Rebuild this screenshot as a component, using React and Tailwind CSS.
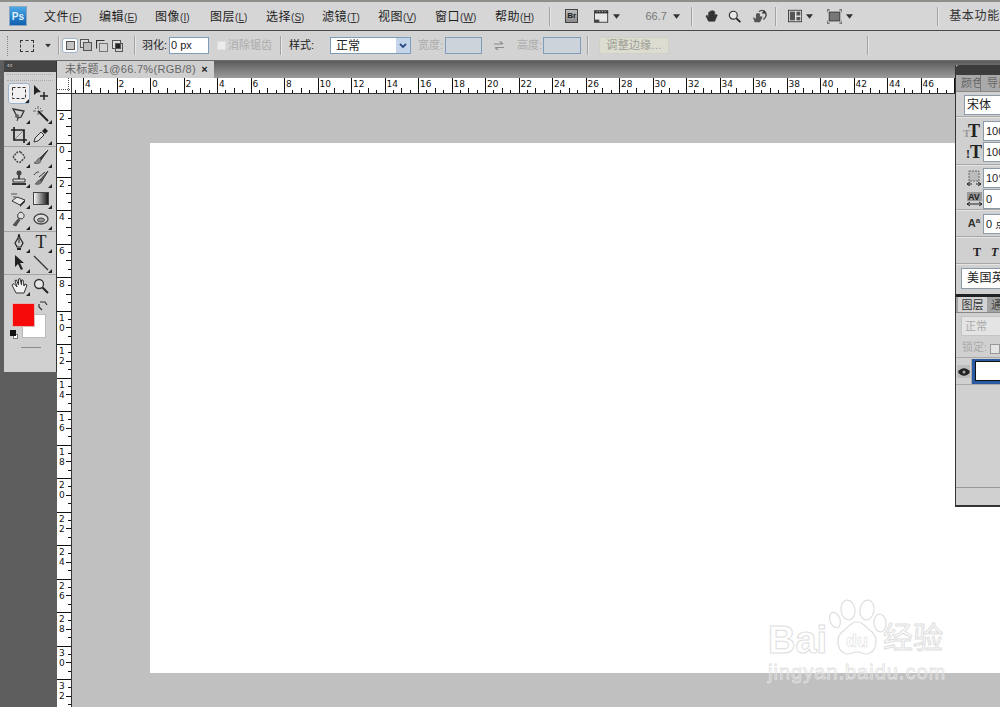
import React from "react";

const Caret = ({ className = "" }) => (
  <svg width="8" height="5" viewBox="0 0 8 5" className={className}><path d="M0 0h8L4 5z" fill="#333" /></svg>
);
const Sep = () => <div className="w-[2px] h-[19px] bg-[#a3a3a3] border-r border-[#e6e6e6]" />;

const MENU = [
  ["文件", "F", 41], ["编辑", "E", 42], ["图像", "I", 41], ["图层", "L", 42], ["选择", "S", 42],
  ["滤镜", "T", 42], ["视图", "V", 43], ["窗口", "W", 46], ["帮助", "H", 43],
];

function MenuBar() {
  return (
    <div className="h-[31px] shrink-0 bg-[#d6d6d6] border-t-[2px] border-t-[#8e8e8a] border-b border-b-[#4a4a4a] flex items-center text-[#1e1e1e] text-[12px]">
      <div className="ml-[9px] w-[20px] h-[20px] bg-gradient-to-b from-[#4aa8e8] to-[#0d5fae] border border-[#8aa6c0] flex items-center justify-center text-[10px] font-bold text-[#dff1ff]">Ps</div>
      <div className="ml-[17px] flex gap-[14px] w-[494px]">
        {MENU.map(([t, k, w]) => (
          <span key={t} style={{ width: w }} className="whitespace-nowrap tracking-[0.6px] pt-[1px]">
            {t}<span className="text-[10px] tracking-normal text-[#333]">(<span className="underline">{k}</span>)</span>
          </span>
        ))}
      </div>
      <div className="ml-[11px]"><Sep /></div>
      <div className="ml-[14px] w-[15px] h-[14px] bg-gradient-to-b from-[#bdbdbd] to-[#8a8a8a] border border-[#444] text-[8px] font-bold flex items-center justify-center text-[#222]">Br</div>
      <svg className="ml-[16px]" width="17" height="15" viewBox="0 0 17 15"><rect x="0.5" y="1" width="15" height="13" fill="#e8e8e8" stroke="#333"/><rect x="1" y="1" width="15" height="3" fill="#333"/><rect x="1" y="11" width="5" height="3" fill="#444"/><path d="M3 2h1M6 2h1M9 2h1M12 2h1" stroke="#fff"/></svg>
      <Caret className="ml-[4px]" />
      <span className="ml-[25px] text-[11px] text-[#777] w-[20px]">66.7</span>
      <Caret className="ml-[8px]" />
      <div className="ml-[10px]"><Sep /></div>
      <svg className="ml-[12px]" width="15" height="16" viewBox="0 0 15 16"><path d="M1 8l3 6h7l3-7-2-1-1 2V3H9.500V7V2H7.500v5V2.500H5.500V8V4H4v6L2.500 7z" fill="#333" stroke="#333" strokeWidth="0.6"/></svg>
      <svg className="ml-[10px]" width="15" height="15" viewBox="0 0 15 15"><circle cx="6" cy="6" r="4.500" fill="#e8e8e8" stroke="#333" strokeWidth="1.300"/><path d="M9.500 9.500L14 14" stroke="#222" strokeWidth="2"/></svg>
      <svg className="ml-[11px]" width="18" height="17" viewBox="0 0 18 17"><path d="M1 9l2 6h6l3-6-2-1-1 1V5H7.500v3V4.500H6V8V5.500H4.500V11z" fill="#555"/><path d="M8 3c3-3 8-1 8 4 0 2-2 4-3 5" fill="none" stroke="#444" strokeWidth="1.500"/><path d="M14 1l1 4-4 0z" fill="#333"/></svg>
      <div className="ml-[7px]"><Sep /></div>
      <svg className="ml-[11px]" width="16" height="14" viewBox="0 0 16 14"><rect x="0.500" y="0.500" width="15" height="13" fill="#ededed" stroke="#333"/><rect x="2" y="2" width="6" height="10" fill="#555"/><rect x="9.500" y="2" width="4.500" height="4.500" fill="#555"/><rect x="9.500" y="8" width="4.500" height="4" fill="#555"/></svg>
      <Caret className="ml-[4px]" />
      <svg className="ml-[14px]" width="17" height="15" viewBox="0 0 17 15"><rect x="2.500" y="2.500" width="12" height="10" fill="#777" stroke="#333"/><path d="M0 3V0h3M14 0h3v3M0 12v3h3M14 15h3v-3" fill="none" stroke="#333"/></svg>
      <Caret className="ml-[4px]" />
      <div className="ml-[84px]"><Sep /></div>
      <span className="ml-[10px] whitespace-nowrap tracking-[0.7px] text-[#333]">基本功能</span>
    </div>
  );
}

function OptionsBar() {
  const inp = "h-[17px] border border-[#7f9db9] shrink-0";
  return (
    <div className="h-[30px] shrink-0 bg-[#d3d3d3] border-b border-b-[#6b6b6b] flex items-center text-[11px] text-[#222]">
      <div className="ml-[7px] w-[2px] h-[20px] border-l border-dotted border-[#888]" />
      <div className="ml-[11px] w-[14px] h-[12px] border border-dashed border-[#333]" />
      <Caret className="ml-[10px] scale-75" />
      <div className="ml-[6px]"><Sep /></div>
      <div className="ml-[2px] w-[16px] h-[15px] bg-white border border-[#9db5cb] rounded-[3px] flex items-center justify-center"><div className="w-[9px] h-[9px] bg-[#c4c4c4] border border-[#555]" /></div>
      <svg className="ml-[2px]" width="13" height="13" viewBox="0 0 13 13"><rect x="0.500" y="0.500" width="8" height="8" fill="#ddd" stroke="#555"/><rect x="3.500" y="3.500" width="8" height="8" fill="#bbb" stroke="#555"/></svg>
      <svg className="ml-[3px]" width="12" height="12" viewBox="0 0 12 12"><path d="M0.500 8.500V0.500H8.500" fill="none" stroke="#333" strokeWidth="1.200"/><rect x="3.500" y="3.500" width="8" height="8" fill="#d3d3d3" stroke="#777"/></svg>
      <svg className="ml-[4px]" width="11" height="12" viewBox="0 0 11 12"><rect x="0.500" y="0.500" width="8" height="8" fill="#ddd" stroke="#555"/><rect x="3" y="3" width="5" height="5" fill="#222"/><rect x="3.500" y="3.500" width="7" height="8" fill="none" stroke="#555"/></svg>
      <div className="ml-[11px]"><Sep /></div>
      <span className="ml-[6px] w-[24px] whitespace-nowrap">羽化:</span>
      <div className={`ml-[3px] w-[40px] bg-white ${inp} pl-[1px] leading-[15px] text-[#222]`}>0 px</div>
      <div className="ml-[8px] w-[9px] h-[9px] bg-[#ececec] border border-[#dedede] shrink-0" />
      <span className="ml-[2px] w-[44px] whitespace-nowrap text-[#adadad] text-[11px]">消除锯齿</span>
      <div className="ml-[8px]"><Sep /></div>
      <span className="ml-[7px] w-[24px] whitespace-nowrap">样式:</span>
      <div className={`ml-[17px] w-[81px] bg-white ${inp} flex items-center justify-between leading-none`}>
        <span className="pl-[5px] text-[12px]">正常</span>
        <div className="w-[14px] h-[15px] bg-[#c4d4ea] flex items-center justify-center">
          <svg width="8" height="6" viewBox="0 0 8 6"><path d="M1 1l3 3 3-3" fill="none" stroke="#2c4a86" strokeWidth="1.800"/></svg>
        </div>
      </div>
      <span className="ml-[7px] w-[24px] whitespace-nowrap text-[#adadad]">宽度:</span>
      <div className={`ml-[3px] w-[37px] bg-[#cdd3da] ${inp}`} />
      <svg className="ml-[12px]" width="10" height="9" viewBox="0 0 10 9"><path d="M0 3h8M6 0.500L9 3M10 6.500H2M4 9L1 6.500" fill="none" stroke="#8a8a8a" strokeWidth="1.200"/></svg>
      <span className="ml-[13px] w-[24px] whitespace-nowrap text-[#adadad]">高度:</span>
      <div className={`ml-[2px] w-[38px] bg-[#cdd3da] ${inp}`} />
      <div className="ml-[6px]"><Sep /></div>
      <div className="ml-[10px] w-[70px] h-[17px] bg-[#dcdcd0] border border-[#d0d0c6] rounded-[2px] flex items-center justify-center text-[#9c9c94] tracking-[0.3px] whitespace-nowrap">调整边缘...</div>
      <div className="ml-[198px]"><Sep /></div>
    </div>
  );
}

const ORIGIN_X = 150 - 72;
const ORIGIN_Y = 143 - 94;
const STEP = 33.5;

function HRuler() {
  const ticks = [];
  for (let i = -3; i <= 27; i++) {
    const x = ORIGIN_X + i * STEP;
    ticks.push(
      <g key={i}>
        <path d={`M${Math.round(x) + 0.5} 0V16`} stroke="#111" />
        <path d={`M${Math.round(x + STEP / 4) + 0.5} 12V16M${Math.round(x + STEP / 2) + 0.5} 10V16M${Math.round(x + (3 * STEP) / 4) + 0.5} 12V16`} stroke="#111" />
        <text x={x + 2} y="9" fontSize="9" fill="#111" fontFamily="'DejaVu Sans',sans-serif">{Math.abs(i * 2)}</text>
      </g>
    );
  }
  return (
    <svg width="928" height="16" className="block shrink-0">
      {ticks}
      <path d="M0 15.500H928" stroke="#333" />
    </svg>
  );
}

function VRuler() {
  const ticks = [];
  for (let i = -1; i <= 17; i++) {
    const y = ORIGIN_Y + i * STEP;
    const digits = String(Math.abs(i * 2)).split("");
    ticks.push(
      <g key={i}>
        <path d={`M0 ${Math.round(y) + 0.5}H15`} stroke="#111" />
        <path d={`M11 ${Math.round(y + STEP / 4) + 0.5}H15M9 ${Math.round(y + STEP / 2) + 0.5}H15M11 ${Math.round(y + (3 * STEP) / 4) + 0.5}H15`} stroke="#111" />
        {digits.map((d, k) => (
          <text key={k} x="2" y={y + 10 + k * 10} fontSize="9" fill="#111" fontFamily="'DejaVu Sans',sans-serif">{d}</text>
        ))}
      </g>
    );
  }
  return (
    <svg width="15" height="613" className="block shrink-0">
      {ticks}
      <path d="M14.500 0V613" stroke="#333" />
    </svg>
  );
}

const S = (p) => <svg width="16" height="16" viewBox="0 0 16 16" {...p} />;
const I = {
  marquee: <S><rect x="1.500" y="2.500" width="13" height="11" fill="none" stroke="#333" strokeDasharray="3 2" /></S>,
  move: <S><path d="M1 0v10l3-2.500 4-.500z" fill="#222" /><path d="M11 7v8M7 11h8" stroke="#222" strokeWidth="1.500" /></S>,
  lasso: <S><path d="M2 3l11 2-3 6-3 1z" fill="none" stroke="#333" strokeWidth="1.300" /><path d="M7 12l-1 3" stroke="#333" /><circle cx="6" cy="10" r="2" fill="#666" /></S>,
  wand: <S><path d="M5 5l10 10" stroke="#222" strokeWidth="2" /><path d="M5 0v3M0 5h3M5 7v2M7 5h3M2 2l1 1M8 2L7 3" stroke="#666" /></S>,
  crop: <S><path d="M3 0v13h13M0 3h13v13" fill="none" stroke="#222" strokeWidth="1.700" /><path d="M4 12L12 4" stroke="#888" /></S>,
  dropper: <S><path d="M1 15l1-4 6-6 3 3-6 6z" fill="#ddd" stroke="#333" /><path d="M9 4l3-3 3 3-3 3z" fill="#222" /></S>,
  heal: <S><rect x="3.500" y="3.500" width="9" height="9" rx="2" transform="rotate(45 8 8)" fill="#d8d8d8" stroke="#444" strokeWidth="1.500" strokeDasharray="2 1" /></S>,
  brush: <S><path d="M15 1L7 9l1 2z" fill="#444" stroke="#333" /><path d="M7 9c-3 0-2 3-6 5 3 1 7 1 7-3z" fill="#888" stroke="#333" strokeWidth=".6" /></S>,
  stamp: <S><circle cx="8" cy="3" r="2.500" fill="#444" /><path d="M7 5h2v4H7z" fill="#444" /><path d="M2 9h12v3H2z" fill="#ddd" stroke="#333" /><path d="M1 13h14v2H1z" fill="#333" /></S>,
  history: <S><path d="M15 1L7 10l2 1zM12 2L6 7" stroke="#333" fill="#666" /><path d="M7 10c-3 0-3 3-5 4 3 1 7 0 7-3z" fill="#777" stroke="#333" strokeWidth=".5" /><path d="M1 5c2-3 4-3 5-3" fill="none" stroke="#333" /></S>,
  eraser: <S><path d="M1 10l5-4 8 3-5 5z" fill="#e8e8e8" stroke="#333" /><path d="M0 3h6M2 6h3" stroke="#555" /><path d="M9 14l5-5v2l-5 5z" fill="#333" /></S>,
  grad: <svg width="17" height="14" viewBox="0 0 17 14"><defs><linearGradient id="g1"><stop offset="0" stopColor="#fff" /><stop offset="1" stopColor="#111" /></linearGradient></defs><rect x=".5" y=".5" width="15" height="12" fill="url(#g1)" stroke="#444" /></svg>,
  dodge: <S><path d="M10 1c4 2 4 5 1 7L7 7c-1-3 0-5 3-6z" fill="#ddd" stroke="#333" /><path d="M7 8l-5 6 3 1 4-6z" fill="#555" stroke="#333" strokeWidth=".6" /></S>,
  sponge: <S><ellipse cx="8" cy="8" rx="7" ry="5" fill="#ddd" stroke="#444" strokeWidth="1.300" /><ellipse cx="8" cy="9" rx="3.500" ry="2" fill="#999" stroke="#444" /></S>,
  pen: <S><path d="M8 0l1 4 3 5-2 4H6L4 9l3-5z" fill="#ccc" stroke="#222" strokeWidth="1.200" /><path d="M6 14h4v2H6z" fill="#222" /><path d="M8 4v5" stroke="#222" /></S>,
  arrow: <S><path d="M4 0v12l3-3 3 6 2-1-3-6h4z" fill="#222" /></S>,
  line: <S><path d="M1 1l14 14" stroke="#333" strokeWidth="1.200" /></S>,
  hand: <svg width="19" height="18" viewBox="0 0 19 18"><path d="M2 8l4 8h8l3-8-2-1-1 2-1-6-1.500 0V8L10 1.500 8.500 2V8L6.500 3 5 3.500 7 10 4 6.500z" fill="#f2f2f2" stroke="#333" strokeLinejoin="round" /></svg>,
  zoom: <S><circle cx="6" cy="6" r="4.500" fill="#e6e6e6" stroke="#333" strokeWidth="1.300" /><path d="M9.500 9.500L15 15" stroke="#222" strokeWidth="2" /></S>,
};

const Tool = ({ icon, flag = true, selected }) => (
  <div className={`relative w-[22px] h-[20.7px] flex items-center justify-center ${selected ? "bg-[#f0f0f0] border border-[#9db5cb] rounded-[3px]" : ""}`}>
    {icon}
    {flag && <span className="absolute right-[0px] bottom-[0px] w-0 h-0 border-l-[4px] border-l-transparent border-b-[4px] border-b-[#222]" />}
  </div>
);

function ToolGroup({ children, last }) {
  return (
    <div className={`grid grid-cols-[22px_22px] justify-between px-[4px] ${last ? "" : "pb-[1px] border-b border-b-[#a4a4a4]"}`}>
      {children}
    </div>
  );
}

function Tools() {
  return (
    <div className="w-[57px] shrink-0 bg-[#5e5e5e] pl-[4px] flex flex-col">
      <div className="w-[53px] border-r border-r-[#333]">
        <div className="h-[11px] bg-[#444] text-[#ddd] text-[8px] leading-[10px] pl-[3px]">‹‹</div>
        <div className="h-[300px] bg-[#d0d0d0] pt-[2px]">
          <div className="h-[7px] mx-[3px] mb-[2px] border-y border-dotted border-[#aaa]" />
          <ToolGroup>
            <Tool icon={I.marquee} selected />
            <Tool icon={I.move} flag={false} />
            <Tool icon={I.lasso} />
            <Tool icon={I.wand} />
            <Tool icon={I.crop} />
            <Tool icon={I.dropper} />
          </ToolGroup>
          <ToolGroup>
            <Tool icon={I.heal} />
            <Tool icon={I.brush} />
            <Tool icon={I.stamp} />
            <Tool icon={I.history} />
            <Tool icon={I.eraser} />
            <Tool icon={I.grad} />
            <Tool icon={I.dodge} />
            <Tool icon={I.sponge} />
          </ToolGroup>
          <ToolGroup>
            <Tool icon={I.pen} />
            <Tool icon={<span className="text-[18px] leading-none text-[#222] font-['Liberation_Serif',serif]">T</span>} />
            <Tool icon={I.arrow} />
            <Tool icon={I.line} />
          </ToolGroup>
          <ToolGroup last>
            <Tool icon={I.hand} />
            <Tool icon={I.zoom} flag={false} />
          </ToolGroup>
          <div className="relative h-[40px] mt-[5px]">
            <div className="absolute left-[18px] top-[13px] w-[24px] h-[24px] bg-white border border-[#bbb]" />
            <div className="absolute left-[8px] top-[2px] w-[23px] h-[24px] bg-[#f60b0b] border border-[#e3b3b3]" />
            <svg className="absolute left-[34px] top-[0px]" width="10" height="10" viewBox="0 0 10 10"><path d="M2 1h5l2 3M1 3v3l3 3" fill="none" stroke="#333" strokeWidth="1.200" /></svg>
            <div className="absolute left-[9px] top-[33px] w-[5px] h-[5px] bg-white border border-[#777]" />
            <div className="absolute left-[6px] top-[29px] w-[6px] h-[6px] bg-[#111]" />
          </div>
          <div className="ml-[17px] w-[20px] h-[1px] bg-[#8a8a8a] mt-[6px]" />
        </div>
      </div>
    </div>
  );
}

function Watermark() {
  const outline = "text-white [-webkit-text-stroke:1px_#dedede]";
  return (
    <div className="absolute left-[768px] top-[598px] w-[190px] h-[90px] font-['Liberation_Sans','Noto_Sans_CJK_SC',sans-serif] pointer-events-none">
      <span className={`absolute left-0 top-[23px] text-[38px] font-bold leading-none ${outline}`}>Bai</span>
      <svg width="60" height="62" viewBox="0 0 60 62" className="absolute left-[60px] top-0">
        <g fill="#fff" fillOpacity="0.9" stroke="#dedede" strokeWidth="1.200">
          <ellipse cx="7" cy="22" rx="5" ry="8" transform="rotate(-20 7 22)" />
          <ellipse cx="20" cy="12" rx="7" ry="10" transform="rotate(-8 20 12)" />
          <ellipse cx="39" cy="12" rx="7" ry="10" transform="rotate(10 39 12)" />
          <ellipse cx="52" cy="25" rx="6" ry="9" transform="rotate(-5 52 25)" />
          <path d="M29 24c7 0 10 7 15 10 6 5 6 20-5 22-4 0-6-2-10-2s-6 2-10 2c-11-2-11-17-5-22 5-3 8-10 15-10z" />
        </g>
      </svg>
      <span className="absolute left-[78px] top-[34px] text-[18px] font-bold leading-none text-white [-webkit-text-stroke:0.6px_#dedede]">du</span>
      <span className={`absolute left-[115px] top-[25px] text-[30px] whitespace-nowrap leading-none ${outline}`}>经验</span>
      <div className="absolute left-0 top-[64px] text-[20px] leading-none tracking-[1px] whitespace-nowrap text-transparent [-webkit-text-stroke:0.8px_#e2e2e2]">jingyan.baidu.com</div>
    </div>
  );
}

const Field = ({ children, className = "" }) => (
  <div className={`bg-white border border-[#8a9aa8] h-[20px] leading-[18px] pl-[2px] text-[11px] whitespace-nowrap overflow-hidden text-[#222] ${className}`}>{children}</div>
);
const Row = ({ icon, value }) => (
  <div className="flex items-center h-[21px]">
    <div className="w-[27px] flex justify-center pl-[9px] shrink-0">{icon}</div>
    <Field className="w-[30px]">{value}</Field>
  </div>
);
const PLine = () => <div className="h-[1px] bg-[#a8a8a8] border-b border-[#e4e4e4] box-content" />;

function Panel() {
  return (
    <div className="absolute left-[955px] top-[65px] w-[60px] h-[442px] bg-[#d0d0d0] border-l border-b-[2px] border-[#333] text-[11px] overflow-hidden flex flex-col">
      <div className="h-[10px] bg-[#3c3c3c] rounded-tl-[3px] shrink-0" />
      <div className="h-[17px] bg-[#a9a9a9] flex items-center text-[#666] text-[11px] pl-[5px] gap-[6px] whitespace-nowrap shrink-0 tracking-[0.6px] border-b border-[#888]">
        <span className="w-[20px] overflow-hidden border-r border-[#777]">颜色</span><span>导航</span>
      </div>
      <div className="h-[24px] pl-[8px] pt-[3px] shrink-0"><Field className="w-[50px] text-[12px]">宋体</Field></div>
      <PLine />
      <div className="pt-[2px] pb-[2px] shrink-0">
        <Row icon={<span className="relative font-['Liberation_Serif',serif] text-[18px] font-bold leading-none text-[#222]">T<span className="absolute -left-[5px] bottom-[1px] text-[11px] text-[#999]">T</span></span>} value="100" />
        <Row icon={<span className="font-['Liberation_Serif',serif] text-[18px] font-bold leading-none text-[#222]"><span className="text-[12px]">!</span>T</span>} value="100" />
      </div>
      <PLine />
      <div className="pt-[1px] shrink-0">
        <Row icon={<svg width="14" height="16" viewBox="0 0 14 16"><rect x="2" y="1" width="10" height="10" fill="#bbb" stroke="#666" strokeDasharray="2 1"/><path d="M0 14h5M9 14h5M3 12l-3 2 3 2M11 12l3 2-3 2" fill="none" stroke="#222"/></svg>} value="10°" />
        <Row icon={<svg width="15" height="14" viewBox="0 0 15 14"><rect x="0" y="0" width="15" height="9" fill="#999"/><text x="1" y="8" fontSize="9" fontWeight="bold" fill="#222" fontFamily="'Liberation Sans',sans-serif">AV</text><path d="M0 12h15M3 10l-3 2 3 2M12 10l3 2-3 2" fill="none" stroke="#222"/></svg>} value="0" />
      </div>
      <PLine />
      <div className="pt-[2px] pb-[2px] shrink-0">
        <Row icon={<span className="text-[11px] font-bold leading-none text-[#333]">A<sup className="text-[8px]">a</sup></span>} value="0 点" />
      </div>
      <PLine />
      <div className="h-[25px] flex items-center pl-[17px] gap-[10px] font-['Liberation_Serif',serif] text-[12px] font-bold text-[#222] shrink-0 pt-[3px]">
        <span>T</span><span className="italic">T</span>
      </div>
      <PLine />
      <div className="h-[29px] pl-[5px] pt-[3px] shrink-0"><Field className="w-[50px] h-[21px] text-[12px] tracking-[0.5px] pl-[5px]">美国英语</Field></div>
      <div className="h-[3px] bg-[#222] shrink-0" />
      <div className="h-[16px] bg-[#a2a2a2] flex shrink-0 pl-[2px] text-[11px] border-b border-[#888]">
        <span className="w-[29px] bg-[#d3d3d3] text-center text-[#333] leading-[16px]">图层</span>
        <span className="w-[4px]" />
        <span className="text-[#444] leading-[16px]">通道</span>
      </div>
      <div className="h-[24px] pl-[5px] pt-[3px] shrink-0"><div className="w-[50px] h-[20px] bg-[#e4e4e4] border border-[#c4c4c4] pl-[3px] leading-[18px] text-[#aaa]">正常</div></div>
      <div className="h-[18px] pl-[6px] flex items-end text-[#aaa] gap-[3px] shrink-0 whitespace-nowrap"><span>锁定:</span><span className="w-[10px] h-[10px] bg-[#e4e4e4] border border-[#999] mb-[1px] shrink-0" /></div>
      <div className="h-[1px] bg-[#aaa] mt-[2px] shrink-0" />
      <div className="h-[26px] flex mt-[1px] border-b border-[#aaa] shrink-0">
        <div className="w-[22px] flex justify-center items-center border-r border-[#aaa]">
          <div className="w-[13px] h-[13px] bg-[#bdbdbd] flex items-center justify-center"><svg width="12" height="8" viewBox="0 0 12 8"><path d="M0 4c3-5 9-5 12 0-3 5-9 5-12 0z" fill="#222"/><circle cx="6" cy="4" r="1.500" fill="#aaa"/></svg></div>
        </div>
        <div className="flex-1 bg-[#2b5aa2] pl-[3px] pt-[2px]"><div className="w-[40px] h-[20px] bg-white border border-[#111]" /></div>
      </div>
      <div className="h-[102px] shrink-0" />
      <div className="h-[1px] bg-[#999] shrink-0" />
    </div>
  );
}

export default function App() {
  return (
    <div className="relative w-[1000px] h-[707px] overflow-hidden flex flex-col bg-[#c0c0c0] font-['Liberation_Sans','Noto_Sans_CJK_SC',sans-serif]">
      <MenuBar />
      <OptionsBar />
      <div className="flex flex-1 min-h-0">
        <Tools />
        <div className="flex-1 min-w-0 flex flex-col">
          <div className="h-[17px] shrink-0 bg-gradient-to-b from-[#5c5c5c] to-[#9c9c9c] flex">
            <div className="w-[157px] bg-[#cfcfcf] pl-[8px] text-[11px] tracking-[0.3px] leading-[17px] text-[#666] whitespace-nowrap flex justify-between pr-[6px]">
              <span>未标题-1@66.7%(RGB/8)</span><span className="text-[#222] font-bold">×</span>
            </div>
          </div>
          <div className="flex shrink-0 h-[16px] bg-white">
            <svg width="15" height="16" className="shrink-0"><path d="M0 11.500H14M11.500 0V13" stroke="#555" strokeDasharray="1 1" /><path d="M14.500 0V16M0 15.500H15" stroke="#333" /></svg>
            <HRuler />
          </div>
          <div className="flex flex-1 min-h-0">
            <div className="bg-white shrink-0"><VRuler /></div>
            <div className="flex-1 min-w-0 overflow-hidden pl-[78px] pt-[49px]">
              <div className="w-[900px] h-[530px] bg-white" />
            </div>
          </div>
        </div>
      </div>
      <Panel />
      <Watermark />
    </div>
  );
}
